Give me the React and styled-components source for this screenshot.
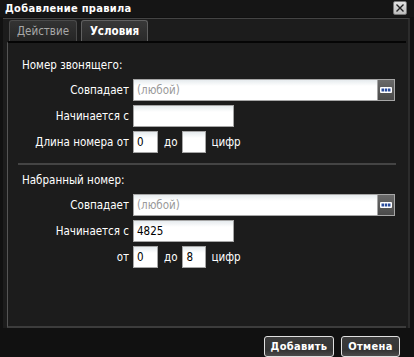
import React from "react";
import styled, { createGlobalStyle } from "styled-components";

const Global = createGlobalStyle`
  html, body {
    margin: 0;
    background: #111;
  }
  body {
    font-family: "DejaVu Sans Condensed", "DejaVu Sans", Verdana, sans-serif;
    font-size: 11.5px;
    color: #fff;
  }
`;

const Dialog = styled.div`
  width: 414px;
  height: 357px;
  background: #111;
  display: flex;
  flex-direction: column;
`;

const TitleBar = styled.div`
  height: 22px;
  display: flex;
  align-items: center;
  justify-content: space-between;
  padding: 0 7px 0 5px;
  background: #151515;
  font-weight: bold;
  font-size: 11px;
  letter-spacing: 0.3px;
`;

const CloseButton = styled.div`
  width: 12px;
  height: 12px;
  margin-top: -2px;
  border: 1px solid #777;
  border-radius: 2px;
  background: linear-gradient(#e2e2e2, #bdbdbd);
  display: flex;
  align-items: center;
  justify-content: center;
`;

const Frame = styled.div`
  margin: 1px 4px 0 3px;
  border-top: 1px solid #444;
  border-right: 2px solid #2c2c2c;
  background: #1c1c1c;
  display: flex;
  flex-direction: column;
`;

const Tabs = styled.div`
  display: flex;
  gap: 4px;
  padding: 0 0 0 6px;
  height: 22px;
`;

const Tab = styled.div`
  box-sizing: border-box;
  width: ${({ $w }) => $w}px;
  justify-content: center;
  border: 1px solid ${({ $active }) => ($active ? "#606060" : "#4a4a4a")};
  border-bottom: none;
  border-radius: 3px 3px 0 0;
  background: ${({ $active }) =>
    $active
      ? "linear-gradient(#383838, #2a2a2a)"
      : "linear-gradient(#333, #252525)"};
  color: ${({ $active }) => ($active ? "#fff" : "#a8a8a8")};
  font-weight: ${({ $active }) => ($active ? "bold" : "normal")};
  display: flex;
  align-items: center;
  margin-top: 1px;
`;

const Panel = styled.div`
  margin: 0 2px 0 4px;
  height: 267px;
  border-top: 2px solid #050505;
  border-left: 1px solid #555;
  border-bottom: 2px solid #3c3c3c;
  background: #1c1c1c;
  padding: 16px 10px 0 10px;
`;

const Heading = styled.div`
  padding-left: 4px;
  height: 13px;
  line-height: 13px;
  margin-bottom: 7px;
`;

const Form = styled.div`
  display: grid;
  grid-template-columns: 111px auto;
  column-gap: 4px;
  row-gap: 4px;
  align-items: center;
`;

const Label = styled.div`
  text-align: right;
`;

const Field = styled.div`
  display: flex;
  align-items: center;
`;

const Input = styled.div`
  box-sizing: border-box;
  width: ${({ $w }) => $w}px;
  height: 22px;
  border: 1px solid #a6a6a6;
  background: linear-gradient(#e6ebee, #fff 6px);
  color: ${({ $muted }) => ($muted ? "#9a9a9a" : "#000")};
  padding: 0 3px;
  display: flex;
  align-items: center;
`;

const PickButton = styled.div`
  box-sizing: border-box;
  width: 17px;
  height: 22px;
  border: 1px solid #a6a6a6;
  border-left: none;
  background: linear-gradient(#6a6a6a, #4a4a4a);
  display: flex;
  align-items: center;
  justify-content: center;
`;

const Word = styled.span`
  margin: 0 ${({ $r }) => $r || 5}px 0 ${({ $l }) => $l || 6}px;
`;

const Separator = styled.div`
  height: 2px;
  background: #444;
  margin: 10px 0 9px 0;
`;

const Footer = styled.div`
  display: flex;
  justify-content: flex-end;
  gap: 7px;
  padding: 8px 14px 0 0;
`;

const Button = styled.div`
  box-sizing: border-box;
  width: ${({ $w }) => $w}px;
  height: 21px;
  justify-content: center;
  border: 1px solid #e0e0e0;
  border-radius: 3px;
  background: linear-gradient(#3c3c3c 0%, #343434 70%, #4a4a4a 100%);
  font-weight: bold;
  font-size: 11px;
  letter-spacing: 0.3px;
  display: flex;
  align-items: center;
`;

const Dots = () => (
  <svg width="12" height="6" viewBox="0 0 12 6">
    <rect x="0" y="0" width="12" height="6" rx="1" fill="#fff" />
    <rect x="1.5" y="1.5" width="2.5" height="3" fill="#2a4c9c" />
    <rect x="4.75" y="1.5" width="2.5" height="3" fill="#2a4c9c" />
    <rect x="8" y="1.5" width="2.5" height="3" fill="#2a4c9c" />
  </svg>
);

const Cross = () => (
  <svg width="10" height="10" viewBox="0 0 10 10">
    <path d="M1.5 1.5 L8.5 8.5 M8.5 1.5 L1.5 8.5" stroke="#222" strokeWidth="1.4" />
  </svg>
);

const Picker = () => (
  <Field>
    <Input $w={245} $muted>(любой)</Input>
    <PickButton>
      <Dots />
    </PickButton>
  </Field>
);

export default function App() {
  return (
    <Dialog>
      <Global />
      <TitleBar>
        <span>Добавление правила</span>
        <CloseButton>
          <Cross />
        </CloseButton>
      </TitleBar>
      <Frame>
        <Tabs>
          <Tab $w={68}>Действие</Tab>
          <Tab $w={67} $active>Условия</Tab>
        </Tabs>
        <Panel>
          <Heading>Номер звонящего:</Heading>
          <Form>
            <Label>Совпадает</Label>
            <Picker />
            <Label>Начинается с</Label>
            <Field>
              <Input $w={101} />
            </Field>
            <Label>Длина номера от</Label>
            <Field>
              <Input $w={25}>0</Input>
              <Word>до</Word>
              <Input $w={24} />
              <Word $l={5}>цифр</Word>
            </Field>
          </Form>
          <Separator />
          <Heading>Набранный номер:</Heading>
          <Form>
            <Label>Совпадает</Label>
            <Picker />
            <Label>Начинается с</Label>
            <Field>
              <Input $w={101}>4825</Input>
            </Field>
            <Label>от</Label>
            <Field>
              <Input $w={25}>0</Input>
              <Word>до</Word>
              <Input $w={24}>8</Input>
              <Word $l={5}>цифр</Word>
            </Field>
          </Form>
        </Panel>
      </Frame>
      <Footer>
        <Button $w={70}>Добавить</Button>
        <Button $w={59}>Отмена</Button>
      </Footer>
    </Dialog>
  );
}
